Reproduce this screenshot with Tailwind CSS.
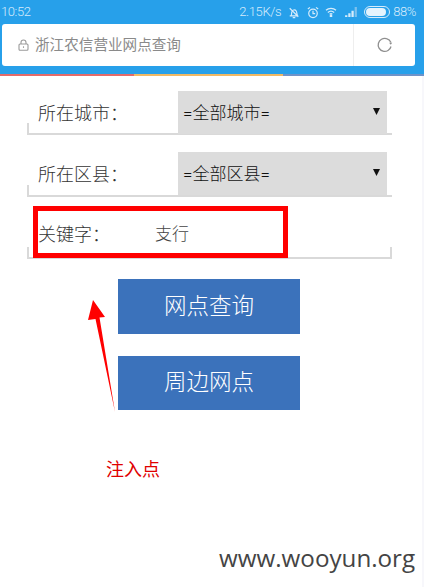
<!DOCTYPE html>
<html lang="zh">
<head>
<meta charset="utf-8">
<script src="https://cdn.jsdelivr.net/npm/@tailwindcss/browser@4"></script>
</head>
<body class="bg-white overflow-hidden font-['Roboto','Noto_Sans_CJK_SC',sans-serif]">
<div class="relative w-[424px] h-[587px] overflow-hidden bg-white">
  <header class="h-[74px] bg-[#27a0ea] pl-[2px] pr-[9px] flex flex-col">
    <div class="h-[24px] flex items-center justify-between text-[13px] tracking-[-0.4px] font-light text-[#d5ebfb] -mr-[1px]">
      <span class="-ml-[1px]">10:52</span>
      <div class="flex items-center">
        <span class="mr-[7px]">2.15K/s</span>
        <svg class="mr-[7px]" width="12" height="13" viewBox="0 0 14 14" fill="none" stroke="#d5ebfb" stroke-width="1.400"><path d="M2 11h10M3.500 11c1-1.500 .5-3 1-5 .4-1.800 3.500-3 5-1 1 1.200 .5 4 1.800 6M5.500 13h3M2 2l10 10"/></svg>
        <svg class="mr-[6px]" width="12" height="13" viewBox="0 0 14 14" fill="none" stroke="#d5ebfb" stroke-width="1.400"><circle cx="7" cy="8" r="5"/><path d="M7 5v3.200h2.500M1 3l2.500-2M13 3l-2.500-2"/></svg>
        <svg class="mr-[7px]" width="12" height="10" viewBox="0 0 13 11" fill="none" stroke="#d5ebfb" stroke-width="1.400"><path d="M1 3.500c3-2.800 8-2.800 11 0M3 6c2-1.700 5-1.700 7 0M5 8c.9-.7 2.100-.7 3 0"/><circle cx="6.500" cy="9.800" r=".8" fill="#d5ebfb"/></svg>
        <svg class="mr-[6px]" width="14" height="10" viewBox="0 0 13 11"><path d="M0 11h2.500V9H0zM3.500 11H6V7H3.500zM7 11h2.500V4H7z" fill="#d5ebfb"/><path d="M10.500 11H13V0h-2.500z" fill="#7cc1ee"/></svg>
        <div class="w-[26px] h-[12px] rounded-[6px] border border-[#d5ebfb] p-[1px] mr-[3px]"><div class="w-[20px] h-full rounded-[4px] bg-[#e4f3fd]"></div></div>
        <span>88%</span>
      </div>
    </div>
    <div class="h-[42px] bg-white rounded-[3px] flex items-center">
      <svg class="ml-[16px] mr-[6px]" width="11" height="12" viewBox="0 0 11 12" fill="none" stroke="#9a9a9a" stroke-width="1.100"><rect x="1" y="5" width="9" height="6.300" rx="1"/><path d="M3 5V3.500a2.500 2.500 0 0 1 5 0V5"/><path d="M5.500 7.300v1.600"/></svg>
      <span class="text-[14.6px] pt-[1px] text-[#8a8a8a]">浙江农信营业网点查询</span>
      <div class="ml-auto w-[62px] h-full border-l border-[#eeeeee] flex items-center justify-center">
        <svg width="16" height="16" viewBox="0 0 16 16" fill="none" stroke="#8f8f8f" stroke-width="1.300"><path d="M14 9.500A6.500 6.500 0 1 1 9.500 1.700 6.500 6.500 0 0 1 14 5.500"/><path d="M12 5.800h3.200l-1.400 2z" fill="#8f8f8f" stroke="none"/></svg>
      </div>
    </div>
  </header>
  <div class="h-[2px] flex">
    <div class="w-[134px] bg-[#e46a6a]"></div>
    <div class="w-[149px] bg-[#f0b964]"></div>
    <div class="flex-1 bg-[#6e93c9]"></div>
  </div>

  <main class="pt-[15px] pl-[27px] w-[392px]">
    <div class="relative h-[44px] border-b-2 border-[#d9d9d9] flex items-center pl-[11px]">
      <span class="absolute left-0 bottom-0 w-[2px] h-[10px] bg-[#d9d9d9]"></span>
      <span class="w-[140px] pt-[3px] text-[18px] leading-none font-light text-[#333333]">所在城市：</span>
      <div class="h-[43px] self-start w-[209px] bg-[#dcdcdc] flex items-center justify-between pl-[5px] pr-[7px] text-[17px] font-light text-[#111111]">
        <span class="pt-[2px]">=全部城市=</span>
        <svg width="7" height="7" viewBox="0 0 7 7" class="-mt-[3px]"><path d="M0 0h7L3.500 7z" fill="#111111"/></svg>
      </div>
    </div>
    <div class="relative h-[45px] mt-[17px] border-b-2 border-[#d9d9d9] flex items-center pl-[11px]">
      <span class="absolute left-0 bottom-0 w-[2px] h-[10px] bg-[#d9d9d9]"></span>
      <span class="w-[140px] pt-[3px] text-[18px] leading-none font-light text-[#333333]">所在区县：</span>
      <div class="h-[43px] self-start w-[209px] bg-[#dcdcdc] flex items-center justify-between pl-[5px] pr-[7px] text-[17px] font-light text-[#111111]">
        <span class="pt-[2px]">=全部区县=</span>
        <svg width="7" height="7" viewBox="0 0 7 7" class="-mt-[3px]"><path d="M0 0h7L3.500 7z" fill="#111111"/></svg>
      </div>
    </div>
    <div class="relative h-[62px] border-b-2 border-[#d9d9d9] flex items-start pl-[11px] pt-[29px]">
      <span class="absolute left-0 bottom-0 w-[2px] h-[10px] bg-[#d9d9d9]"></span>
      <span class="absolute right-0 bottom-0 w-[2px] h-[10px] bg-[#d9d9d9]"></span>
      <span class="w-[117px] text-[18px] leading-none font-light text-[#333333] whitespace-nowrap">关键字：</span>
      <span class="text-[17px] leading-none font-light text-[#444444]">支行</span>
    </div>
  </main>

  <div class="mt-[20px] ml-[118px] w-[182px] flex flex-col gap-[22px]">
    <button class="h-[55px] bg-[#3b72bb] text-white text-[22.5px] font-light">网点查询</button>
    <button class="h-[54px] bg-[#3b72bb] text-white text-[22.5px] font-light">周边网点</button>
  </div>

  <div class="absolute left-[33px] top-[206px] w-[255px] h-[52px] border-[5px] border-[#ff0000]"></div>
  <svg class="absolute left-0 top-0" width="424" height="587" viewBox="0 0 424 587"><polygon points="93,300 105,317 99.500,317.500 115,412 95.500,319 88,320" fill="#ff0000"/></svg>
  <span class="absolute left-[106px] top-[459px] text-[18px] leading-[22px] font-normal text-[#e00000]">注入点</span>
  <span class="absolute left-[219px] top-[541px] text-[24.2px] leading-[34px] text-[#444444] font-['Open_Sans',sans-serif]">www.wooyun.org</span>
  <div class="absolute right-0 top-[76px] bottom-0 w-[2px] bg-[#f7f7fb]"></div>
</div>
</body>
</html>
